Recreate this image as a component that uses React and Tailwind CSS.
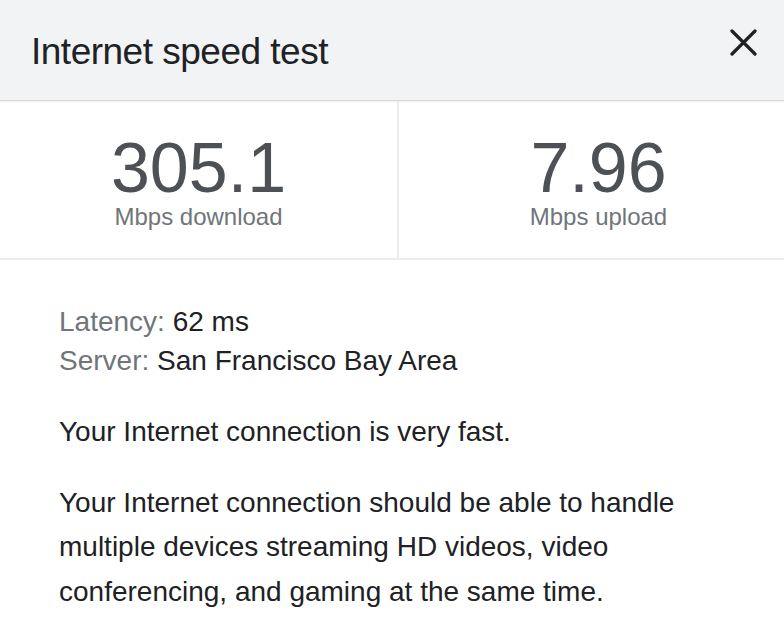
import React from 'react';

const stats = [
  { value: '305.1', label: 'Mbps download' },
  { value: '7.96', label: 'Mbps upload' },
];

const App = () => {
  return (
    <div className="w-[784px] h-[634px] overflow-hidden bg-white font-['Liberation_Sans',Arial,sans-serif]">
      <div className="w-[798px]">
        {/* Header */}
        <div className="bg-[#f1f3f4] border-b border-[#d6d8db] shadow-[0_1px_2px_rgba(0,0,0,0.06)] flex items-start justify-between h-[101px] pl-[31px] pr-[41px]">
          <h1 className="pt-[33px] text-[37px] leading-[37px] tracking-[-0.5px] text-[#202124]">
            Internet speed test
          </h1>
          <button type="button" className="mt-[29px] text-[#202124]" aria-label="Close">
            <svg width="27" height="27" viewBox="0 0 27 27" fill="none" stroke="currentColor" strokeWidth="3.2" strokeLinecap="round">
              <line x1="2" y1="2" x2="25" y2="25" />
              <line x1="25" y1="2" x2="2" y2="25" />
            </svg>
          </button>
        </div>

        {/* Speed results */}
        <div className="grid grid-cols-2 border-b-2 border-[#ececec]">
          {stats.map((s, i) => (
            <div
              key={s.label}
              className={`flex flex-col items-center pt-[34px] pb-[27px] ${i === 0 ? 'border-r-2 border-[#ececec]' : ''}`}
            >
              <div className="text-[70px] leading-[66px] text-[#4d5156]">{s.value}</div>
              <div className="mt-[2px] text-[24px] leading-[28px] text-[#70757a]">{s.label}</div>
            </div>
          ))}
        </div>

        {/* Details */}
        <div className="pl-[59px] pr-[72px] pt-[42px] text-[28px] text-[#202124]">
          <div className="leading-[39px]">
            <div>
              <span className="text-[#70757a]">Latency:</span> 62 ms
            </div>
            <div>
              <span className="text-[#70757a]">Server:</span> San Francisco Bay Area
            </div>
          </div>
          <p className="mt-[30px] leading-[44.5px]">Your Internet connection is very fast.</p>
          <p className="mt-[26px] leading-[44.5px] w-[660px]">
            Your Internet connection should be able to handle multiple devices streaming HD videos, video
            conferencing, and gaming at the same time.
          </p>
        </div>
      </div>
    </div>
  );
};

export default App;
